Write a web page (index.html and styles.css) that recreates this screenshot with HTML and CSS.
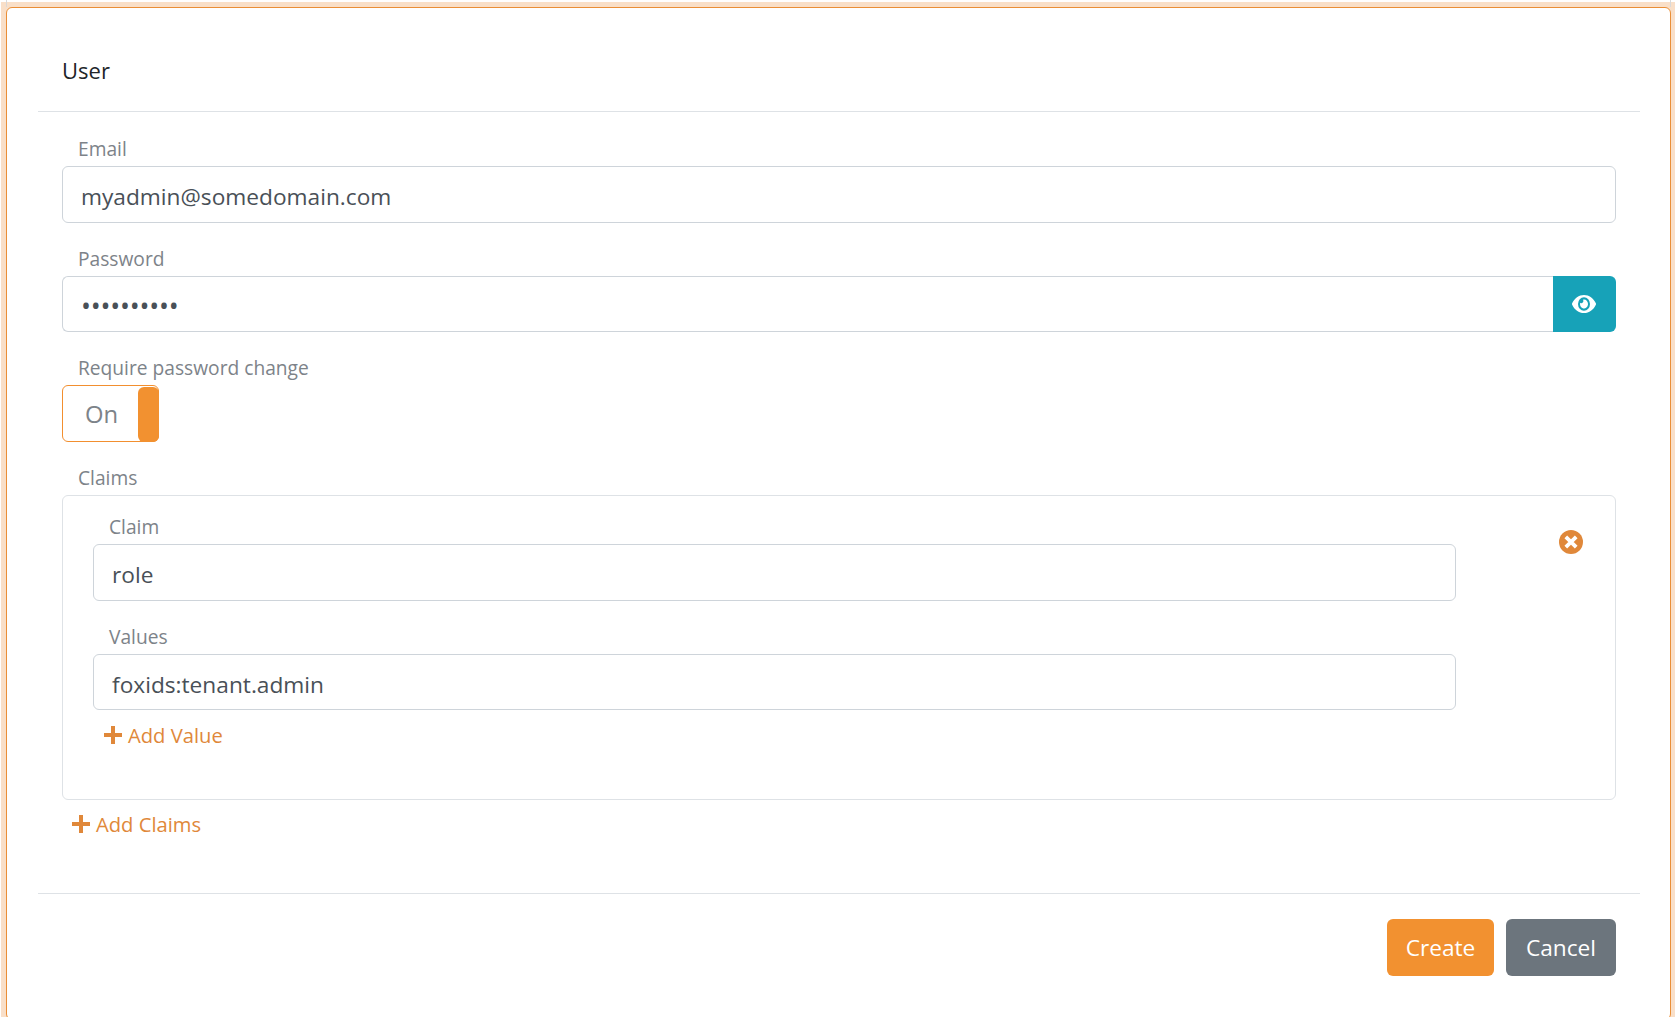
FILE: index.html
```html
<!DOCTYPE html>
<html lang="en">
<head>
<meta charset="utf-8">
<title>User</title>
<link rel="stylesheet" href="styles.css">
</head>
<body>
<div class="frame">
<main class="card">
  <header class="card-header"><h1 class="title">User</h1></header>
  <form class="card-body">
    <div class="field">
      <label class="label">Email</label>
      <div class="control">myadmin@somedomain.com</div>
    </div>
    <div class="field">
      <label class="label">Password</label>
      <div class="input-group">
        <div class="control control-joined">••••••••••</div>
        <button type="button" class="eye-btn" aria-label="Show password">
          <svg class="eye-icon" viewBox="0 0 576 512" preserveAspectRatio="none"><path fill="currentColor" d="M572.52 241.4C518.29 135.59 410.93 64 288 64S57.68 135.64 3.48 241.41a32.35 32.35 0 0 0 0 29.19C57.71 376.41 165.07 448 288 448s230.32-71.64 284.52-177.41a32.35 32.35 0 0 0 0-29.19zM288 400a144 144 0 1 1 144-144 143.93 143.93 0 0 1-144 144zm0-240a95.31 95.31 0 0 0-25.31 3.79 47.85 47.85 0 0 1-66.9 66.9A95.78 95.78 0 1 0 288 160z"/></svg>
        </button>
      </div>
    </div>
    <div class="field">
      <label class="label">Require password change</label>
      <div class="toggle"><span class="toggle-text">On</span><span class="toggle-thumb"></span></div>
    </div>
    <div class="field">
      <label class="label">Claims</label>
      <div class="claims-box">
        <div class="claim-main">
          <div class="field">
            <label class="label">Claim</label>
            <div class="control">role</div>
          </div>
          <div class="field">
            <label class="label">Values</label>
            <div class="control">foxids:tenant.admin</div>
          </div>
          <a class="add-link add-value"><svg class="plus-icon" viewBox="0 0 18 18"><path fill="currentColor" d="M7 0h4v7h7v4h-7v7H7v-7H0V7h7z"/></svg>Add Value</a>
        </div>
        <button type="button" class="remove-btn" aria-label="Remove claim">
          <svg class="remove-icon" viewBox="0 0 24 24"><circle cx="12" cy="12" r="12" fill="currentColor"/><path d="M6.8 6.8l10.4 10.4M17.2 6.8L6.8 17.2" stroke="#fff" stroke-width="3.8" fill="none"/></svg>
        </button>
      </div>
      <a class="add-link add-claims"><svg class="plus-icon" viewBox="0 0 18 18"><path fill="currentColor" d="M7 0h4v7h7v4h-7v7H7v-7H0V7h7z"/></svg>Add Claims</a>
    </div>
  </form>
  <footer class="card-footer">
    <button type="button" class="btn btn-primary">Create</button>
    <button type="button" class="btn btn-secondary">Cancel</button>
  </footer>
</main>
</div>
</body>
</html>
```
FILE: styles.css
```css
* { box-sizing: border-box; }
html, body { margin: 0; height: 100%; overflow: hidden; }
body {
  background: #fff;
  padding: 2px 0 0 1px;
  font-family: "Open Sans", "Noto Sans", sans-serif;
  color: #495057;
}
.frame {
  position: relative;
  height: 1015px;
  background: #f9dfc8;
  padding: 5px 4px 0 5px;
}
.frame::before,
.frame::after {
  content: "";
  position: absolute;
  top: -2px;
  width: 1px;
  height: 7px;
  background: #d9d9d9;
}
.frame::before { left: 5px; }
.frame::after { right: 4px; }
.card {
  height: 1013px;
  background: #fff;
  border: 1px solid #ea8e36;
  border-radius: 6px;
  padding: 0 30px 0 31px;
  display: flex;
  flex-direction: column;
}
.card-header {
  height: 104px;
  padding: 46px 0 0 24px;
  border-bottom: 1px solid #dee2e6;
}
.title { margin: 0; font-size: 22px; font-weight: 400; line-height: 32px; color: #212529; }
.card-body { flex: 1; padding: 1px 24px 0; }
.field { margin-top: 20px; }
.label {
  display: block;
  padding-left: 16px;
  height: 33px;
  font-size: 19.2px;
  line-height: 32px;
  color: #7d8389;
}
.control {
  height: 56.7px;
  padding: 0 18px;
  border: 1px solid #ced4da;
  border-radius: 6px;
  background: #fff;
  font-size: 22.7px;
  line-height: 59px;
  color: #495057;
}
.input-group { display: flex; }
.control-joined { flex: 1; border-right: 0; border-radius: 6px 0 0 6px; font-size: 26.5px; letter-spacing: -0.2px; }
.eye-btn {
  width: 63px;
  height: 56.7px;
  border: 0;
  padding: 0 1px 0 0;
  background: #17a2b8;
  color: #fff;
  border-radius: 0 6px 6px 0;
  display: flex;
  align-items: center;
  justify-content: center;
}
.eye-icon { width: 24px; height: 24px; }
.toggle {
  position: relative;
  width: 97px;
  height: 56.7px;
  border: 1px solid #f28f2f;
  border-radius: 6px;
  padding-left: 22px;
  font-size: 23.8px;
  line-height: 57px;
  color: #7d8389;
}
.toggle-thumb {
  position: absolute;
  right: -1px;
  top: 1px;
  bottom: -1px;
  width: 21px;
  background: #f29130;
  border-radius: 6px;
}
.claims-box {
  display: flex;
  height: 305px;
  border: 1px solid #dee2e6;
  border-radius: 6px;
  padding: 0 32px 0 30px;
}
.claim-main { width: 1363px; }
.claim-main .field:first-child { margin-top: 15px; }
.remove-btn {
  margin: 34px 0 0 auto;
  width: 24px;
  height: 24px;
  padding: 0;
  border: 0;
  background: none;
  color: #e0883a;
}
.remove-icon { display: block; width: 24px; height: 24px; }
.add-link {
  display: flex;
  align-items: center;
  font-size: 20.2px;
  line-height: 30px;
  color: #e0883a;
}
.plus-icon { width: 18px; height: 18px; margin-right: 6px; }
.add-value { margin: 10px 0 0 11px; }
.add-claims { margin: 9px 0 0 10px; }
.card-footer {
  height: 126px;
  border-top: 1px solid #dee2e6;
  display: flex;
  justify-content: flex-end;
  gap: 12px;
  padding: 25px 24px 0 0;
}
.btn {
  height: 57px;
  border: 0;
  border-radius: 6px;
  font-family: inherit;
  font-size: 22.7px;
  color: #fff;
}
.btn-primary { width: 107px; background: #f29130; }
.btn-secondary { width: 110px; background: #6c757d; }
```
